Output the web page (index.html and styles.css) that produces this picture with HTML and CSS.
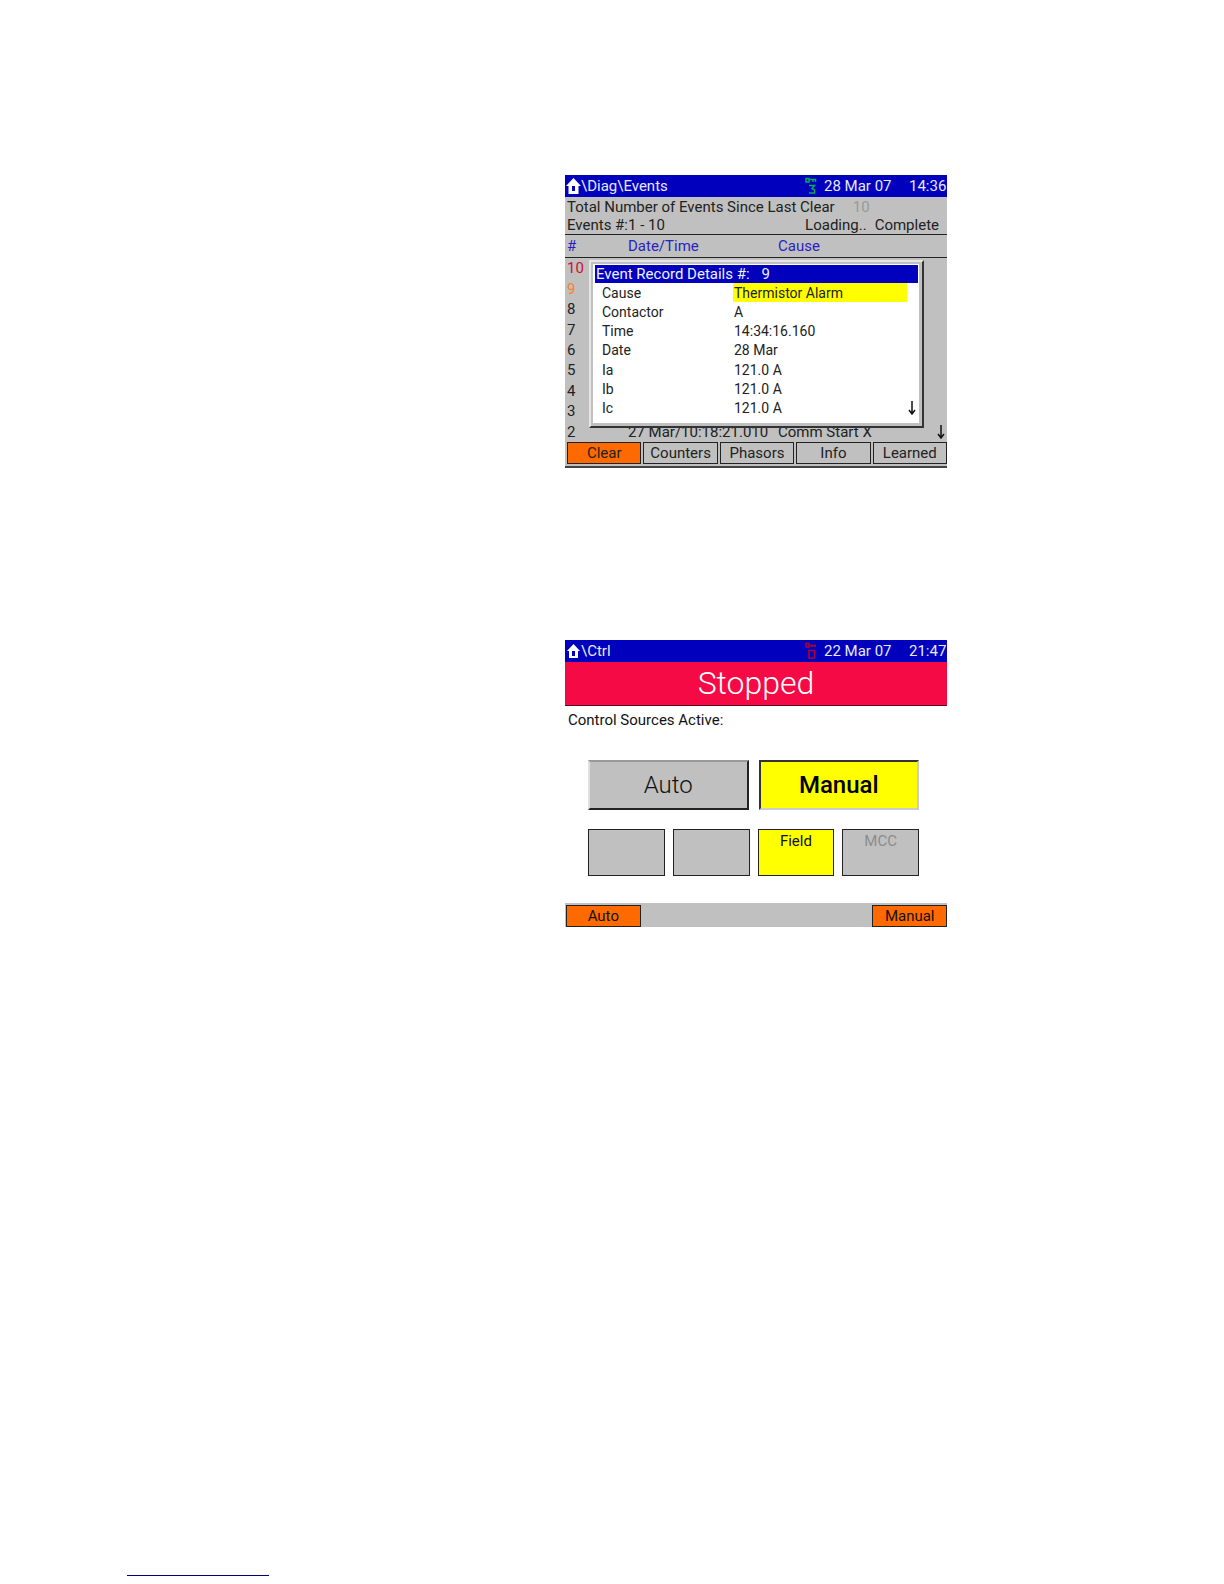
FILE: index.html
```
<!DOCTYPE html>
<html lang="en">
<head>
    <meta charset="UTF-8">
    <meta name="viewport" content="width=device-width, initial-scale=1.0">
    <title>Relay display</title>
    <link rel="stylesheet" href="styles.css">
</head>
<body>
<main class="page">
    <section class="screen events">
        <header class="topbar">
            <svg class="home" viewBox="0 0 15 16"><path d="M7.5 0L15 8H12.5V16H2.5V8H0Z" fill="#fff"/><path d="M6 8H9V13H6Z" fill="#0000bd"/></svg>
            <span class="path">\Diag\Events</span>
            <svg class="key key-green" viewBox="0 0 12 18"><path d="M1 1.5H4V5H1ZM4 2.5H10.5V5M8 2.5V5M4 8.5H9.5L7 11.5L9.500 13V16H4"/></svg>
            <span class="date">28 Mar 07</span>
            <span class="time">14:36</span>
        </header>
        <div class="summary">
            <div class="summary-row"><span>Total Number of Events Since Last Clear</span><span class="total">10</span></div>
            <div class="summary-row"><span>Events #:1 - 10</span><span class="loading">Loading..</span><span class="status">Complete</span></div>
        </div>
        <div class="list">
            <table class="event-table">
                <thead>
                    <tr><th class="col-num">#</th><th class="col-date">Date/Time</th><th>Cause</th><th class="col-scroll"></th></tr>
                </thead>
                <tbody>
                    <tr><td class="alarm">10</td><td></td><td></td><td></td></tr>
                    <tr><td class="warn">9</td><td></td><td></td><td></td></tr>
                    <tr><td>8</td><td></td><td></td><td></td></tr>
                    <tr><td>7</td><td></td><td></td><td></td></tr>
                    <tr><td>6</td><td></td><td></td><td></td></tr>
                    <tr><td>5</td><td></td><td></td><td></td></tr>
                    <tr><td>4</td><td></td><td></td><td></td></tr>
                    <tr><td>3</td><td></td><td></td><td></td></tr>
                    <tr><td>2</td><td>27 Mar/10:18:21.010</td><td>Comm Start X</td><td><svg class="arrow" viewBox="0 0 8 14"><path d="M4 0V13M1 9L4 13L7 9"/></svg></td></tr>
                </tbody>
            </table>
            <div class="dialog">
                <div class="dialog-title"><span>Event Record Details #:</span><span>9</span></div>
                <table class="details">
                    <tr><th>Cause</th><td class="selected">Thermistor Alarm</td><td class="scroll"></td></tr>
                    <tr><th>Contactor</th><td>A</td><td></td></tr>
                    <tr><th>Time</th><td>14:34:16.160</td><td></td></tr>
                    <tr><th>Date</th><td>28 Mar</td><td></td></tr>
                    <tr><th>Ia</th><td>121.0 A</td><td></td></tr>
                    <tr><th>Ib</th><td>121.0 A</td><td></td></tr>
                    <tr><th>Ic</th><td>121.0 A</td><td><svg class="arrow" viewBox="0 0 8 14"><path d="M4 0V13M1 9L4 13L7 9"/></svg></td></tr>
                </table>
            </div>
        </div>
        <nav class="softkeys">
            <button class="key-btn orange">Clear</button>
            <button class="key-btn">Counters</button>
            <button class="key-btn">Phasors</button>
            <button class="key-btn">Info</button>
            <button class="key-btn">Learned</button>
        </nav>
    </section>

    <section class="screen control">
        <header class="topbar">
            <svg class="home" viewBox="0 0 15 16"><path d="M7.5 1L14 8H12V15H3V8H1Z" fill="#fff"/><path d="M6 8H9V13H6Z" fill="#0000bd"/></svg>
            <span class="path">\Ctrl</span>
            <svg class="key key-red" viewBox="0 0 12 18"><path d="M1 1.5H4V5H1ZM4 3.5H11M7 3.5V5M10 3.5V5M3 8.5H9.5V16H4V8.5"/></svg>
            <span class="date">22 Mar 07</span>
            <span class="time">21:47</span>
        </header>
        <h1 class="state">Stopped</h1>
        <p class="sources">Control Sources Active:</p>
        <div class="modes">
            <button class="mode raised">Auto</button>
            <button class="mode pressed">Manual</button>
        </div>
        <div class="places">
            <div class="place"></div>
            <div class="place"></div>
            <div class="place active">Field</div>
            <div class="place off">MCC</div>
        </div>
        <nav class="softkeys">
            <button class="key-btn orange">Auto</button>
            <button class="key-btn orange last">Manual</button>
        </nav>
    </section>
</main>
<footer class="footer">
    <hr class="rule">
</footer>
</body>
</html>
```

FILE: styles.css
```
* {
    box-sizing: border-box;
}
body {
    margin: 0;
    min-height: 100vh;
    display: flex;
    flex-direction: column;
    background-color: #fff;
    color: #222;
    font-family: Roboto, "Liberation Sans", sans-serif;
    font-size: 15px;
    line-height: 18px;
}
button {
    font: inherit;
    color: inherit;
    padding: 0;
    margin: 0;
    border-radius: 0;
}
.page {
    flex: 1;
    display: grid;
    grid-template-columns: 565fr 382fr 277fr;
    align-content: start;
    row-gap: 172px;
    padding-top: 175px;
}
.screen {
    grid-column: 2;
    min-width: 0;
}
.topbar {
    display: flex;
    align-items: center;
    height: 22px;
    padding: 0 2px 0 1px;
    background-color: #0000bd;
    color: #e8e8ff;
}
.home {
    width: 15px;
    height: 16px;
}
.path {
    flex: 1;
}
.key {
    width: 12px;
    height: 18px;
    margin-right: 7px;
    fill: none;
    stroke-width: 1.5;
}
.key-green {
    stroke: #00b050;
}
.key-red {
    stroke: #b00030;
}
.date {
    width: 85px;
}
.time {
    width: 36px;
    text-align: right;
    white-space: nowrap;
}

/* events screen */
.events {
    background-color: #c0c0c0;
    border-bottom: 2px solid #444;
}
.summary {
    padding: 0 8px 0 2px;
}
.summary-row {
    display: flex;
}
.summary-row:first-child {
    padding-top: 1px;
}
.total {
    margin-left: 18px;
    color: #999;
}
.loading {
    margin-left: auto;
    margin-right: 8px;
}
.list {
    position: relative;
}
.event-table {
    width: 100%;
    height: 208px;
    table-layout: fixed;
    border-collapse: collapse;
}
.event-table th {
    height: 23px;
    padding: 0 2px;
    border-top: 1px solid #222;
    border-bottom: 1px solid #222;
    color: #2a1fc0;
    font-weight: normal;
    text-align: left;
}
.event-table td {
    padding: 0 2px;
    white-space: nowrap;
}
.event-table .col-num {
    width: 61px;
}
.event-table .col-date {
    width: 150px;
}
.event-table .col-scroll {
    width: 12px;
}
.event-table .alarm {
    color: #cc1030;
}
.event-table .warn {
    color: #ff7f27;
}
.arrow {
    display: block;
    width: 8px;
    height: 14px;
    fill: none;
    stroke: #111;
    stroke-width: 1.5;
}
/* popup over the event list */
.dialog {
    position: absolute;
    top: 26px;
    left: 24px;
    right: 23px;
    padding: 3px 4px 8px;
    background-color: #fff;
    border: 2px solid #e6e6e6;
    border-right-color: #333;
    border-bottom-color: #333;
    box-shadow: inset -3px -3px #c0c0c0, inset 2px 2px #c0c0c0;
}
.dialog-title {
    display: flex;
    gap: 12px;
    background-color: #0000bd;
    color: #f0f0ff;
    padding-left: 1px;
}
.details {
    width: 100%;
    height: 135px;
    table-layout: fixed;
    border-collapse: collapse;
    font-size: 14px;
}
.details th {
    width: 138px;
    padding: 0 0 0 7px;
    font-weight: normal;
    text-align: left;
}
.details td {
    padding: 0 1px;
}
.details .selected {
    background-color: #ff0;
}
.details .scroll {
    width: 11px;
}
.softkeys {
    display: grid;
    grid-template-columns: repeat(5, 1fr);
    gap: 2px;
    background-color: #c0c0c0;
}
.events .softkeys {
    padding: 0 0 2px 2px;
}
.key-btn {
    height: 22px;
    background-color: #c0c0c0;
    border: 1px solid #222;
}
.orange {
    background-color: #ff6a00;
}

/* control screen */
.control {
    color: #111;
}
.state {
    margin: 0;
    height: 44px;
    border-bottom: 1px solid #600020;
    background-color: #f50a46;
    color: #fff;
    font-size: 32px;
    font-weight: 300;
    line-height: 42px;
    text-align: center;
}
.sources {
    margin: 5px 3px 31px;
}
.modes {
    display: grid;
    grid-template-columns: 1fr 1fr;
    gap: 10px;
    padding: 0 28px 0 23px;
}
.mode {
    height: 50px;
    font-size: 24px;
}
.raised {
    background-color: #c0c0c0;
    border: 2px solid #e0e0e0;
    border-top-color: #999;
    border-right-color: #222;
    border-bottom-color: #222;
    font-weight: 300;
}
.pressed {
    background-color: #ff0;
    border: 2px solid #333;
    border-right-color: #ccc;
    border-bottom-color: #ccc;
    color: #000;
    font-weight: 500;
}
.places {
    display: grid;
    grid-template-columns: repeat(4, 1fr);
    gap: 8px;
    padding: 19px 28px 27px 23px;
}
.place {
    height: 47px;
    padding-top: 2px;
    background-color: #c0c0c0;
    border: 1px solid #222;
    text-align: center;
}
.active {
    background-color: #ff0;
}
.off {
    color: #8c8c8c;
}
.control .softkeys {
    padding: 2px 0 0 1px;
}
.last {
    grid-column: 5;
}
.footer {
    padding: 0 127px 8px;
}
.rule {
    width: 142px;
    margin: 0;
    border: 0;
    border-top: 1px solid #00007f;
}
```
